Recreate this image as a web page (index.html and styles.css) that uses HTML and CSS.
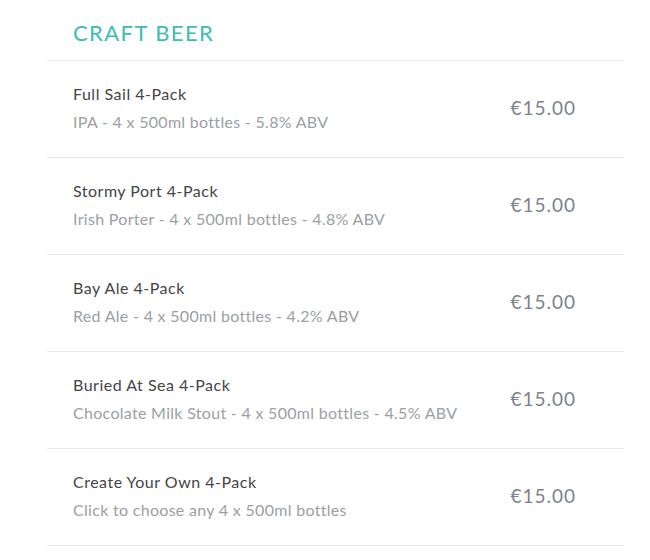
FILE: index.html
```html
<!DOCTYPE html>
<html>
<head>
<meta charset="utf-8">
<link rel="stylesheet" href="styles.css">
</head>
<body>
<section class="menu">
  <h2 class="menu-title">CRAFT BEER</h2>
  <ul class="items">
    <li class="item">
      <div class="info"><div class="name">Full Sail 4-Pack</div><div class="desc">IPA - 4 x 500ml bottles - 5.8% ABV</div></div>
      <div class="price">€15.00</div>
    </li>
    <li class="item">
      <div class="info"><div class="name">Stormy Port 4-Pack</div><div class="desc">Irish Porter - 4 x 500ml bottles - 4.8% ABV</div></div>
      <div class="price">€15.00</div>
    </li>
    <li class="item">
      <div class="info"><div class="name">Bay Ale 4-Pack</div><div class="desc">Red Ale - 4 x 500ml bottles - 4.2% ABV</div></div>
      <div class="price">€15.00</div>
    </li>
    <li class="item">
      <div class="info"><div class="name">Buried At Sea 4-Pack</div><div class="desc">Chocolate Milk Stout - 4 x 500ml bottles - 4.5% ABV</div></div>
      <div class="price">€15.00</div>
    </li>
    <li class="item">
      <div class="info"><div class="name">Create Your Own 4-Pack</div><div class="desc">Click to choose any 4 x 500ml bottles</div></div>
      <div class="price">€15.00</div>
    </li>
  </ul>
</section>
</body>
</html>
```
FILE: styles.css
```css
html, body { margin: 0; padding: 0; background: #fff; }
body { font-family: Lato, "Open Sans", sans-serif; }
.menu { margin-left: 47px; width: 577px; }
.menu-title {
  margin: 0;
  padding: 21px 0 15px 26px;
  font-size: 22px;
  line-height: 24px;
  font-weight: 400;
  letter-spacing: 1.4px;
  color: #3cbdb0;
  border-bottom: 1px solid #e9e9e9;
}
.items { list-style: none; margin: 0; padding: 0; }
.item {
  display: flex;
  align-items: center;
  justify-content: space-between;
  padding: 23px 48px 25px 26px;
  border-bottom: 1px solid #e9e9e9;
}
.info { display: flex; flex-direction: column; gap: 8px; }
.name { font-size: 16px; line-height: 20px; color: #454545; letter-spacing: 0.5px; }
.desc { font-size: 16px; line-height: 20px; color: #9b9fa4; letter-spacing: 0.3px; }
.price { font-size: 19px; line-height: 22px; color: #7d838a; letter-spacing: 1px; }
```
